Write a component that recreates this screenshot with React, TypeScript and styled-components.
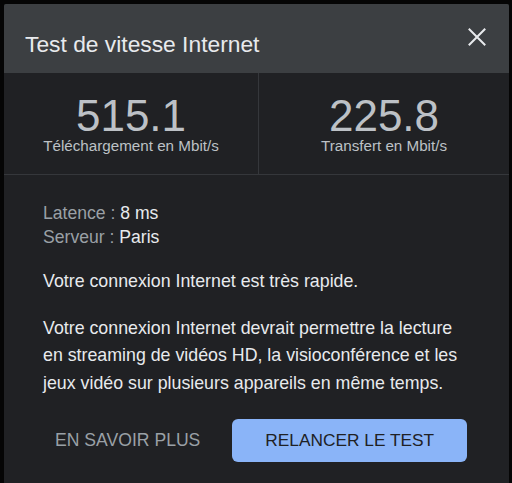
import React from "react";
import styled, { createGlobalStyle } from "styled-components";

const GlobalStyle = createGlobalStyle`
  html, body {
    margin: 0;
    padding: 0;
    background: #050505;
  }
  body {
    font-family: "Liberation Sans", Arial, Helvetica, sans-serif;
  }
  * { box-sizing: border-box; }
`;

const Page = styled.div`
  height: 483px;
  padding: 4px 3px 0 4px;
  overflow: hidden;
`;

const Dialog = styled.div`
  height: 100%;
  background: #202124;
  border-radius: 2px 2px 0 0;
  display: flex;
  flex-direction: column;
  overflow: hidden;
`;

const Header = styled.div`
  height: 69px;
  flex: none;
  background: #3c3f42;
  display: flex;
  align-items: flex-start;
  justify-content: space-between;
  padding: 24px 23px 0 21px;
`;

const Title = styled.h1`
  margin: 2px 0 0;
  font-size: 22.8px;
  line-height: 28px;
  font-weight: 400;
  color: #e8eaed;
`;

const CloseButton = styled.button`
  width: 18px;
  height: 18px;
  padding: 0;
  border: none;
  background: transparent;
  color: #e8eaed;
  display: flex;
  cursor: pointer;
`;

const Stats = styled.div`
  display: grid;
  grid-template-columns: 254px 1fr;
  border-bottom: 1px solid #35373b;
`;

const StatCell = styled.div<{ $divider?: boolean }>`
  padding: 23px 0 19px;
  text-align: center;
  border-left: ${(p) => (p.$divider ? "1px solid #35373b" : "none")};
`;

const StatValue = styled.div`
  font-size: 44px;
  line-height: 40px;
  color: #bdc1c6;
`;

const StatLabel = styled.div`
  margin-top: 1px;
  font-size: 15.2px;
  line-height: 18px;
  color: #bdc1c6;
`;

const Body = styled.div`
  padding: 26px 44px 0 39px;
  font-size: 17.6px;
  color: #e8eaed;
`;

const InfoLine = styled.div`
  line-height: 24px;
`;

const InfoLabel = styled.span`
  color: #9aa0a6;
`;

const Paragraph = styled.p`
  margin: 19px 0 0;
  font-size: 17.8px;
  line-height: 27.5px;
`;

const Actions = styled.div`
  display: flex;
  align-items: center;
  gap: 20px;
  margin-top: 22px;
  margin-right: -40px;
`;

const TextButton = styled.button`
  flex: none;
  height: 43px;
  padding: 0 12px;
  border: none;
  background: transparent;
  color: #9aa0a6;
  font-family: inherit;
  font-size: 17.6px;
  white-space: nowrap;
  cursor: pointer;
`;

const PrimaryButton = styled.button`
  flex: none;
  height: 43px;
  padding: 0 33px;
  border: none;
  border-radius: 6px;
  background: #8ab4f8;
  color: #202124;
  font-family: inherit;
  font-size: 17.3px;
  white-space: nowrap;
  cursor: pointer;
`;

export default function App() {
  return (
    <>
      <GlobalStyle />
      <Page>
        <Dialog>
          <Header>
            <Title>Test de vitesse Internet</Title>
            <CloseButton aria-label="Fermer">
              <svg width="18" height="18" viewBox="0 0 18 18">
                <path
                  d="M1.5 1.5 L16.5 16.5 M16.5 1.5 L1.5 16.5"
                  stroke="currentColor"
                  strokeWidth="2"
                  strokeLinecap="square"
                  fill="none"
                />
              </svg>
            </CloseButton>
          </Header>
          <Stats>
            <StatCell>
              <StatValue>515.1</StatValue>
              <StatLabel>Téléchargement en Mbit/s</StatLabel>
            </StatCell>
            <StatCell $divider>
              <StatValue>225.8</StatValue>
              <StatLabel>Transfert en Mbit/s</StatLabel>
            </StatCell>
          </Stats>
          <Body>
            <InfoLine>
              <InfoLabel>Latence : </InfoLabel>8 ms
            </InfoLine>
            <InfoLine>
              <InfoLabel>Serveur : </InfoLabel>Paris
            </InfoLine>
            <Paragraph>Votre connexion Internet est très rapide.</Paragraph>
            <Paragraph>
              Votre connexion Internet devrait permettre la lecture en streaming de vidéos HD, la
              visioconférence et les jeux vidéo sur plusieurs appareils en même temps.
            </Paragraph>
            <Actions>
              <TextButton>EN SAVOIR PLUS</TextButton>
              <PrimaryButton>RELANCER LE TEST</PrimaryButton>
            </Actions>
          </Body>
        </Dialog>
      </Page>
    </>
  );
}
